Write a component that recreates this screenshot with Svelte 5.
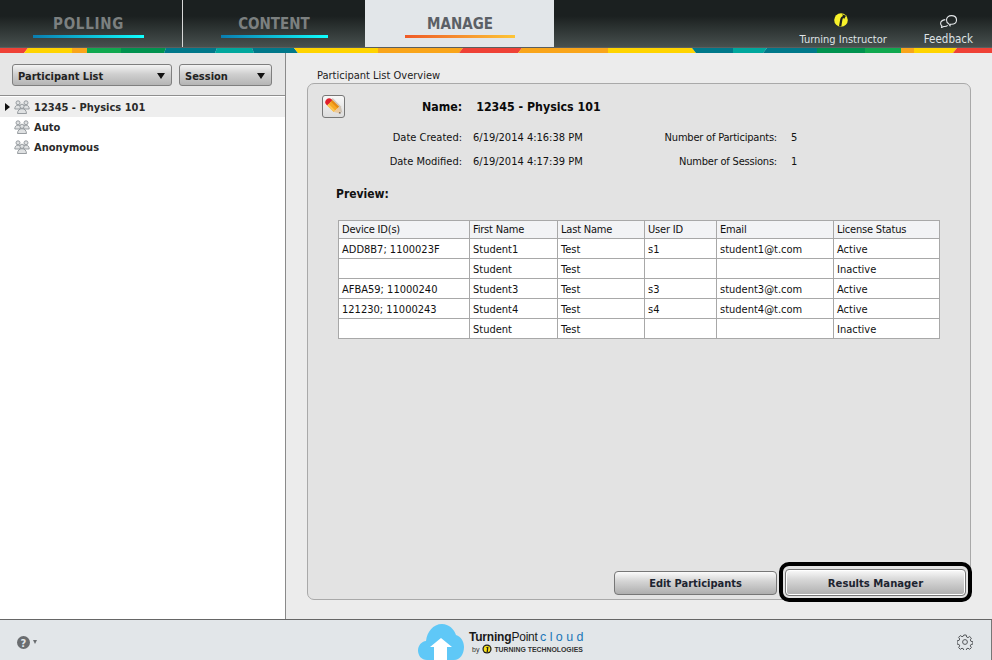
<script>
  const columns = ['Device ID(s)', 'First Name', 'Last Name', 'User ID', 'Email', 'License Status'];
  const rows = [
    ['ADD8B7; 1100023F', 'Student1', 'Test', 's1', 'student1@t.com', 'Active'],
    ['', 'Student', 'Test', '', '', 'Inactive'],
    ['AFBA59; 11000240', 'Student3', 'Test', 's3', 'student3@t.com', 'Active'],
    ['121230; 11000243', 'Student4', 'Test', 's4', 'student4@t.com', 'Active'],
    ['', 'Student', 'Test', '', '', 'Inactive']
  ];
  const lists = ['12345 - Physics 101', 'Auto', 'Anonymous'];
  const R = '#ef4136', Y = '#ffd400', O = '#f9a51a', G = '#10a84f', D = '#00924f', T = '#00788a', L = '#00a79d';
  // colour, boundary x on its right edge, slant of that edge (px, + leans like "/")
  const segs = [
    [R, 26, 2], [Y, 72, 0], [O, 87, 0], [G, 121, 0], [D, 165, 1], [T, 216, 1], [L, 253, -1], [T, 296, -2],
    [Y, 378, 0], [O, 461, 2], [R, 520, 2], [O, 608, 0], [Y, 694, -2], [T, 733, 0], [L, 765, 2], [T, 817, 0],
    [D, 865, 0], [G, 901, 0], [O, 914, 0], [Y, 955, 2], [R, 992, 0]
  ];
  const polys = segs.map((s, i) => {
    const px = i ? segs[i - 1][1] : 0;
    const ps = i ? segs[i - 1][2] : 0;
    return { fill: s[0], points: `${px + ps},0 ${s[1] + s[2]},0 ${s[1] - s[2]},5 ${px - ps},5` };
  });
</script>

{#snippet people()}
  <svg class="people" viewBox="0 0 16 14" width="16" height="14">
    <g fill="#dfe1e2" stroke="#8f9498" stroke-width="0.9">
      <circle cx="4" cy="2.800" r="2"/><circle cx="12" cy="2.800" r="2"/>
      <path d="M.8 9c0-2.400 1.200-3.800 3.200-3.800 1.400 0 2.400.6 3 1.800l-1 2z"/>
      <path d="M15.200 9c0-2.400-1.200-3.800-3.200-3.800-1.400 0-2.400.6-3 1.800l1 2z"/>
      <circle cx="8" cy="6.300" r="2.100"/>
      <path d="M3.500 13.500c0-3 2-4.800 4.500-4.800s4.500 1.800 4.500 4.800z"/>
    </g>
  </svg>
{/snippet}

<div class="app">
  <header class="top">
    <nav class="tabs">
      <div class="tab t1"><span class="tl">POLLING</span><i class="ul cool u1"></i></div>
      <div class="tab t2"><span class="tl">CONTENT</span><i class="ul cool u2"></i></div>
      <div class="tab t3"><span class="tl">MANAGE</span><i class="ul warm"></i></div>
    </nav>
    <div class="tools">
      <div class="tool ti">
        <svg viewBox="0 0 14 14" width="14" height="14">
          <circle cx="7" cy="7" r="6.800" fill="#f7f12a"/>
          <path d="M5 13.300 6.200 6.500C6.500 4.700 7.600 3.500 9 3L8 1.200 12 2.800 10 6.300 9.500 4.800C8.900 5.200 8.500 5.800 8.400 6.700L7.300 13.500z" fill="#1c1f1f"/>
        </svg>
        <span>Turning Instructor</span>
      </div>
      <div class="tool fb">
        <svg viewBox="0 0 17 13" width="17" height="13" fill="none" stroke="#e3e6e8" stroke-width="1.100">
          <path d="M11.500.6c3 0 5 1.800 5 4.300 0 2.400-2 4.300-5 4.300h-1l-.5 1.500-1.300-2C7.400 8 6.500 6.700 6.500 4.900c0-2.500 2-4.300 5-4.300z"/>
          <path d="M5.300 4.600C2.500 5 .6 6.500.6 8.500c0 1 .5 1.800 1.200 2.300l-.3 1.800 2.200-1.100c1.500.2 3-.2 4-1.200"/>
        </svg>
        <span>Feedback</span>
      </div>
    </div>
  </header>

  <div class="stripe">
    <svg viewBox="0 0 992 5" width="992" height="5">
      {#each polys as p}<polygon points={p.points} fill={p.fill}/>{/each}
    </svg>
  </div>

  <main class="main">
    <aside class="side">
      <div class="filters">
        <button class="drop d1">Participant List<i class="arrow"></i></button>
        <button class="drop d2">Session<i class="arrow"></i></button>
      </div>
      <ul class="list">
        {#each lists as name, i}
          <li class:sel={i === 0}>
            <i class="caret" class:on={i === 0}></i>
            {@render people()}
            <span>{name}</span>
          </li>
        {/each}
      </ul>
    </aside>

    <section class="content">
      <h2 class="legend">Participant List Overview</h2>
      <div class="panel">
        <div class="head">
          <button class="edit" aria-label="Edit">
            <svg viewBox="0 0 20 20" width="21" height="21">
              <g transform="rotate(-45 11 10)">
                <path d="M8.500 3H15.500V14L12 19.500z" fill="#b9a68c" opacity=".55"/>
              </g>
              <g transform="rotate(-45 10 10)">
                <path d="M6.500 3.500C6.500 1.500 8 .5 10 .5s3.500 1 3.500 3V5H6.500z" fill="#e01f2b"/>
                <rect x="6.500" y="5" width="7" height="9" fill="#f7a823"/>
                <rect x="6.500" y="5" width="2" height="9" fill="#fcc655"/>
                <rect x="11.500" y="5" width="2" height="9" fill="#e58a14"/>
                <path d="M6.500 14H13.500L10 19.500z" fill="#eac9a0"/>
                <path d="M9 18H11L10 19.500z" fill="#3b3026"/>
              </g>
            </svg>
          </button>
          <div class="name"><b>Name:</b><b class="val">12345 - Physics 101</b></div>
        </div>
        <div class="meta">
          <div class="mrow">
            <span class="mk">Date Created:</span><span class="mv">6/19/2014 4:16:38 PM</span>
            <span class="mk2">Number of Participants:</span><span class="mv2">5</span>
          </div>
          <div class="mrow">
            <span class="mk">Date Modified:</span><span class="mv">6/19/2014 4:17:39 PM</span>
            <span class="mk2">Number of Sessions:</span><span class="mv2">1</span>
          </div>
        </div>
        <h3 class="preview">Preview:</h3>
        <table>
          <thead><tr>{#each columns as c}<th>{c}</th>{/each}</tr></thead>
          <tbody>
            {#each rows as r}
              <tr>{#each r as c}<td>{c}</td>{/each}</tr>
            {/each}
          </tbody>
        </table>
        <div class="actions">
          <button class="btn b-edit">Edit Participants</button>
          <div class="focus">
            <button class="btn b-res">Results Manager</button>
            <span class="ring"></span>
          </div>
        </div>
      </div>
    </section>
  </main>

  <footer class="foot">
    <div class="help">
      <svg viewBox="0 0 13 13" width="13" height="13">
        <circle cx="6.500" cy="6.500" r="6.500" fill="#6a6d70"/>
        <text x="6.500" y="10.500" text-anchor="middle" class="q">?</text>
      </svg>
      <i class="tiny"></i>
    </div>
    <div class="logo">
      <svg viewBox="0 0 46 36" width="46" height="36">
        <path d="M9 36C3.500 36 0 31.500 0 26.500 0 21.500 3.500 17.500 8 17 9 8 15 0 24 0c7 0 12 5 14 11 5 1.500 8 6.500 8 12 0 7-4 13-10 13z" fill="#5fc8f7"/>
        <path d="M23 14 34 23 29 23 29 36 16 36 16 23 12 23z" fill="#fff"/>
      </svg>
      <div class="brand">
        <div class="b1"><span class="tp"><b>Turning</b>Point</span><span class="cl">cloud</span></div>
        <div class="b2">
          <small>by</small>
          <svg viewBox="0 0 12 12" width="10" height="10"><circle cx="6" cy="6" r="5.500" fill="#1d1d1d"/><circle cx="6" cy="6" r="4" fill="#f7e11a"/><path d="M4.500 4.500 7.800 3 7 9.500H5.500L6 5z" fill="#1d1d1d"/></svg>
          <strong>TURNING TECHNOLOGIES</strong>
        </div>
      </div>
    </div>
    <svg class="gear" viewBox="0 0 16 16" width="16" height="16" fill="none" stroke="#55585b" stroke-width="1">
      <circle cx="8" cy="8" r="2.400"/>
      <path d="M6.800 1h2.400l.4 2 1.400.6 1.700-1.100 1.700 1.700-1.100 1.700.6 1.400 2 .4v2.400l-2 .4-.6 1.400 1.100 1.700-1.700 1.700-1.700-1.100-1.400.6-.4 2H6.800l-.4-2-1.400-.6-1.700 1.100-1.700-1.700 1.100-1.700-.6-1.400-2-.4V6.800l2-.4.6-1.400-1.100-1.700 1.700-1.700 1.700 1.100 1.400-.6z"/>
    </svg>
  </footer>
</div>

<style>
  :global(body) { margin: 0; }
  .app {
    width: 992px; height: 660px; display: flex; flex-direction: column; overflow: hidden;
    background: #ececec; color: #111;
    font-family: "DejaVu Sans Condensed", "DejaVu Sans", sans-serif; font-size: 11px;
  }
  button { font-family: inherit; margin: 0; }
  i { display: block; }

  .top {
    height: 47px; flex: none; display: flex; justify-content: space-between;
    background: linear-gradient(#1b2020 0, #1b2020 16px, #47504e 47px);
  }
  .tabs { display: flex; }
  .tab { display: flex; flex-direction: column; align-items: center; height: 47px; box-sizing: border-box; padding-top: 14px; }
  .t1 { width: 183px; border-right: 1px solid #d8d8d8; padding-right: 5px; }
  .t1 .tl { letter-spacing: 0.700px; }
  .t2 { width: 182px; }
  .t3 { width: 189px; background: #e2e6e9; padding-left: 1px; }
  .tl { font: bold 15px/20px "DejaVu Sans Condensed", "DejaVu Sans", sans-serif; color: #7c8080; }
  .t3 .tl { color: #5b6066; }
  .ul { height: 3px; margin-top: 1px; }
  .cool { background: linear-gradient(90deg, #0a7db0, #10ffff); }
  .warm { background: linear-gradient(90deg, #ef5a27, #fdc536); width: 110px; }
  .u1 { width: 111px; }
  .u2 { width: 107px; }

  .tools { display: flex; padding-right: 19px; gap: 37px; }
  .tool { display: flex; flex-direction: column; align-items: center; color: #dfe3e6; line-height: 14px; }
  .tool svg { display: block; }
  .ti { padding-top: 13px; font-size: 11px; }
  .ti svg { margin: 0 4px 6px 0; }
  .fb { padding-top: 15px; font-size: 11.500px; }
  .fb svg { margin-bottom: 4px; }

  .stripe { height: 5px; flex: none; border-top: 1px solid #5a5f5f; overflow: hidden; }
  .stripe svg { display: block; }

  .main { flex: 1; min-height: 0; display: flex; border-bottom: 1px solid #666; }
  .side { width: 285px; flex: none; border-right: 1px solid #8a8a8a; background: #fff; display: flex; flex-direction: column; }
  .filters { height: 43px; flex: none; box-sizing: border-box; background: #e6e6e6; border-bottom: 1px solid #8f8f8f; padding: 11px 0 0 12px; display: flex; gap: 7px; }
  .drop {
    height: 22px; box-sizing: border-box; padding: 2px 6px 0 5px; border: 1px solid #7f7f7f; border-radius: 3px;
    background: linear-gradient(#f4f4f4, #d0d0d0 45%, #b4b4b4);
    font-weight: bold; font-size: 11px; color: #222; display: flex; align-items: center; justify-content: space-between;
  }
  .d1 { width: 160px; }
  .d2 { width: 93px; }
  .arrow { width: 0; height: 0; border-left: 4px solid transparent; border-right: 4px solid transparent; border-top: 6px solid #111; }
  .list { list-style: none; margin: 0; padding: 1px 0 0; }
  .list li { height: 20px; display: flex; align-items: center; font-weight: bold; color: #2a2a2a; font-size: 11px; }
  .list li.sel { background: #eeeeee; }
  .caret { width: 5px; margin-left: 5px; flex: none; }
  .caret.on { width: 0; border-left: 5px solid #111; border-top: 4px solid transparent; border-bottom: 4px solid transparent; }
  .people { margin: 0 4px; flex: none; }

  .content { flex: 1; min-width: 0; padding: 16px 21px 19px 21px; display: flex; flex-direction: column; }
  .legend { margin: 0 0 0 10px; font-weight: normal; font-size: 11px; line-height: 14px; color: #222; }
  .panel { flex: 1; min-height: 0; box-sizing: border-box; border: 1px solid #a9a9a9; border-radius: 7px; background: #e3e3e3; padding: 11px 31px 0 14px; display: flex; flex-direction: column; }
  .head { display: flex; height: 23px; }
  .edit { width: 23px; height: 23px; padding: 0; box-sizing: border-box; border: 1px solid #777; border-radius: 3px; background: linear-gradient(#f8f8f8, #dcdcdc); display: flex; align-items: center; justify-content: center; }
  .edit svg { display: block; flex: none; }
  .name { display: flex; font-size: 12.300px; line-height: 24px; color: #0a0a0a; margin-left: 77px; }
  .val { margin-left: 14px; }
  .meta { margin-top: 7px; }
  .mrow { display: flex; height: 24px; align-items: center; font-size: 11px; }
  .mk { width: 140px; text-align: right; }
  .mv { margin-left: 11px; width: 180px; }
  .mk2 { width: 124px; text-align: right; letter-spacing: -0.200px; }
  .mv2 { margin-left: 14px; }
  .preview { margin: 13px 0 0 14px; font-size: 12px; line-height: 16px; color: #111; }
  table { border-collapse: collapse; margin: 18px 0 0 16px; width: 602px; table-layout: fixed; font-size: 11px; background: #fff; }
  th, td { border: 1px solid #a8a8a8; padding: 0 3px; text-align: left; font-weight: normal; line-height: 14px; box-sizing: border-box; white-space: nowrap; overflow: hidden; }
  td { height: 20px; padding-top: 2px; }
  th { height: 18px; background: #f2f3f5; letter-spacing: -0.200px; }
  th:nth-child(1) { width: 131px; }
  th:nth-child(2) { width: 88px; }
  th:nth-child(3) { width: 87px; }
  th:nth-child(4) { width: 72px; }
  th:nth-child(5) { width: 117px; }
  .actions { margin-top: auto; display: flex; justify-content: flex-end; align-items: center; gap: 8px; margin-right: -27px; padding-bottom: 3px; }
  .btn {
    padding: 2px 0 0; box-sizing: border-box; border: 1px solid #777; border-radius: 4px;
    background: linear-gradient(#fbfbfb, #d6d6d6 40%, #aeaeae);
    font-weight: bold; color: #1d2430;
  }
  .b-edit { width: 163px; height: 24px; font-size: 11px; }
  .b-res { width: 181px; height: 27px; font-size: 11.200px; display: block; box-shadow: inset 0 0 0 1px #fff; }
  .focus { position: relative; }
  .ring { position: absolute; inset: -7px -6px -6px -6px; border: 4px solid #000; border-radius: 10px; pointer-events: none; }

  .foot { height: 40px; flex: none; box-sizing: border-box; background: #e2e6e9; border-right: 1px solid #777; position: relative; display: flex; align-items: center; justify-content: space-between; padding: 4px 18px 0 17px; }
  .help { display: flex; align-items: center; gap: 3px; }
  .help svg { display: block; }
  .q { font: bold 10px "DejaVu Sans", sans-serif; fill: #e2e6e9; }
  .tiny { width: 0; height: 0; border-left: 2.500px solid transparent; border-right: 2.500px solid transparent; border-top: 4px solid #6a6d70; }
  .logo { position: absolute; left: 418px; top: 4px; display: flex; gap: 5px; }
  .logo > svg { display: block; }
  .brand { padding-top: 6px; }
  .b1 { display: flex; font: 12px/15px "Liberation Sans", sans-serif; color: #1a1a1a; letter-spacing: -0.200px; }
  .tp { width: 71px; }
  .cl { color: #1a76b8; font-size: 12.500px; letter-spacing: 3.400px; }
  .b2 { display: flex; align-items: center; gap: 2px; height: 12px; margin: -2px 0 0 3px; }
  .b2 small { font: 7px "Liberation Sans", sans-serif; color: #333; margin-right: 1px; }
  .b2 strong { font: bold 6.900px "Liberation Sans", sans-serif; color: #333; }
</style>
